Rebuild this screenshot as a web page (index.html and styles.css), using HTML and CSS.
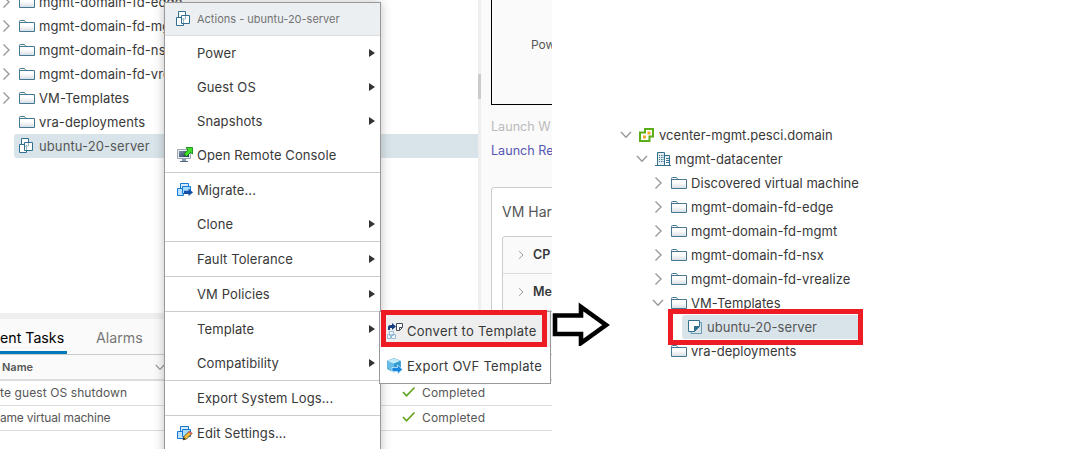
FILE: index.html
```
<!DOCTYPE html>
<html lang="en">
<head>
<meta charset="utf-8">
<title>Convert to Template</title>
<link rel="stylesheet" href="styles.css">
</head>
<body>
<svg class="defs" width="0" height="0">
  <defs>
    <linearGradient id="fade" x1="0" y1="0" x2="0" y2="1"><stop offset=".45" stop-color="#fff"/><stop offset="1" stop-color="#d5dde2"/></linearGradient>
    <linearGradient id="screen" x1="0" y1="0" x2="1" y2="1"><stop offset="0" stop-color="#8092a8"/><stop offset="1" stop-color="#243a5c"/></linearGradient>
    <symbol id="folder" viewBox="0 0 16 16"><path d="M.5 13.500V3.500Q.5 2.500 1.500 2.500H5.500L7 4.500H15.500V13.500Z" fill="url(#fade)" stroke="#447791"/><path d="M1 4.500H7" stroke="#447791"/></symbol>
    <symbol id="vm" viewBox="0 0 16 16"><path d="M3.500 6V.5H10.500V4" fill="#fff" stroke="#31708f"/><path d="M1.500 6.500H8.500V14.500H1.500Z" fill="#fff" stroke="#31708f"/><path d="M6.500 4.500H14.500V12.500H6.500Z" fill="#fff" stroke="#31708f"/><path d="M8.500 7V12M10.500 5V8H7" stroke="#9abaca" fill="none"/></symbol>
    <symbol id="right" viewBox="0 0 10 14"><path d="M1.500 1.500L7 7L1.500 12.500" fill="none" stroke="#999" stroke-width="1.400"/></symbol>
    <symbol id="down" viewBox="0 0 12 8"><path d="M1 1L6 6.300L11 1" fill="none" stroke="#999" stroke-width="1.400"/></symbol>
    <symbol id="vcenter" viewBox="0 0 16 16"><path d="M6 5.500V2H14V9.500H10.500V14H1V5.500Z" fill="#fff" stroke="#5cae17" stroke-width="2"/><path d="M4 8.500h3v3H4zM8.500 4.500h3v3h-3z" fill="#f9a825"/></symbol>
    <symbol id="datacenter" viewBox="0 0 16 16"><path d="M2.500 14V1.500H9.500V14M9.500 4.500H14.500V14" fill="#e5edf1" stroke="#31708f"/><path d="M0 14.500H16" stroke="#31708f"/><path d="M4.500 4V12M6.500 4V12M8 4V12" stroke="#447791" stroke-dasharray="1 1"/><path d="M11 7.500h3M11 9.500h3M11 11.500h3" stroke="#447791"/></symbol>
    <symbol id="template" viewBox="0 0 16 16"><path d="M4 12.500V14.500H14.500V3.500H12" fill="none" stroke="#6b9ab1"/><path d="M1.500 1.500H12.500V7.500L7.500 12.500H1.500Z" fill="#fff" stroke="#31708f"/><path d="M7 13V7H13Z" fill="#31708f"/></symbol>
    <symbol id="console" viewBox="0 0 16 16"><path d="M.5 2.500H13.500V11.500H.5Z" fill="#e8edf2" stroke="#9ba7b5"/><path d="M2 4H12V10H2Z" fill="url(#screen)"/><path d="M5 12h4v2H5z" fill="#8798ad"/><path d="M3 14.500H11" stroke="#52667f"/><path d="M9 .5H15.500V7L13.500 5.500L9.500 9.500L7 7L11 3Z" fill="#3fdc29" stroke="#087b0b" stroke-width=".8"/></symbol>
    <symbol id="cubes" viewBox="0 0 16 16"><path d="M3.500 1.500H11.500V8.500H3.500Z" fill="#d3ecff" stroke="#1578d3"/><path d="M.5 6.500H6.500V13.500H.5Z" fill="#bce2ff" stroke="#1578d3"/><path d="M5.500 4.500H13.500V11.500H5.500Z" fill="#a5dcff" stroke="#1578d3"/></symbol>
    <symbol id="migrate" viewBox="0 0 16 16"><use href="#cubes"/><path d="M7 8.800H11.500V6.500L16 10.500L11.500 14V12H7Z" fill="#1550a6"/></symbol>
    <symbol id="edit" viewBox="0 0 16 16"><use href="#cubes"/><path d="M6 14.800L7 11.500L12.500 6L15 8.500L9.500 14Z" fill="#f9bd35" stroke="#493c26" stroke-width=".8"/><path d="M12.500 6L15 8.500L14 9.500L11.500 7Z" fill="#dd536d"/><path d="M6 14.800L7 12.500L8.500 14Z" fill="#222"/></symbol>
    <symbol id="convert" viewBox="0 0 16 16"><path d="M1 7V4Q1 2 4 2H5V0L9 3.500L5 7V5H3V7Z" fill="#173d83"/><path d="M9.500.5H15.500V4.500L12.500 7.500H9.500Z" fill="#fff" stroke="#424b59"/><path d="M12.500 7V4.500H15" fill="none" stroke="#424b59"/><path d="M2.500 8.500h4v4h-4zM.5 11.500h3v4h-3zM4.500 11.500h4v4h-4z" fill="#eef7ff" stroke="#97b9d5"/></symbol>
    <symbol id="export" viewBox="0 0 16 16"><path d="M7 .5L13.500 3V11L7 14L.5 11V3Z" fill="#65bde8" stroke="#4b9fc9" stroke-width=".7"/><path d="M.5 3L7 5.500L13.500 3L7 .5Z" fill="#c2ebfb"/><path d="M7 5.500V14L13.500 11V3Z" fill="#349bd2"/><path d="M5 9.500H10.500V7L15.500 11.500L10.500 16V13.500H5Z" fill="#1686df" stroke="#e4f5ff" stroke-width=".7"/></symbol>
    <symbol id="check" viewBox="0 0 14 12"><path d="M1 6L4.500 9.800L12.500 1.500" fill="none" stroke="#62a420" stroke-width="1.700"/></symbol>
  </defs>
</svg>
<main class="stage">
  <section class="client">
    <div class="upper">
      <div class="inventory">
        <div class="row"><svg class="chev"><use href="#right"/></svg><svg class="icon"><use href="#folder"/></svg><span>mgmt-domain-fd-edge</span></div>
        <div class="row"><svg class="chev"><use href="#right"/></svg><svg class="icon"><use href="#folder"/></svg><span>mgmt-domain-fd-mgmt</span></div>
        <div class="row"><svg class="chev"><use href="#right"/></svg><svg class="icon"><use href="#folder"/></svg><span>mgmt-domain-fd-nsx</span></div>
        <div class="row"><svg class="chev"><use href="#right"/></svg><svg class="icon"><use href="#folder"/></svg><span>mgmt-domain-fd-vrealize</span></div>
        <div class="row"><svg class="chev"><use href="#right"/></svg><svg class="icon"><use href="#folder"/></svg><span>VM-Templates</span></div>
        <div class="row leaf"><svg class="icon"><use href="#folder"/></svg><span>vra-deployments</span></div>
        <div class="row selected"><svg class="icon"><use href="#vm"/></svg><span>ubuntu-20-server</span></div>
      </div>
      <div class="splitter"><div class="grip"></div></div>
      <div class="summary">
        <div class="preview">Pow</div>
        <div class="launch disabled">Launch W</div>
        <div class="launch">Launch Re</div>
        <div class="card">
          <div class="card-title">VM Har</div>
          <div class="hardware">
            <div class="hw"><svg class="hw-chev"><use href="#right"/></svg>CP</div>
            <div class="hw"><svg class="hw-chev"><use href="#right"/></svg>Me</div>
          </div>
        </div>
      </div>
    </div>
    <div class="divider"></div>
    <div class="tabs"><div class="tab active">ent Tasks</div><div class="tab">Alarms</div></div>
    <div class="task head"><span>Name</span><svg class="sort"><use href="#down"/></svg></div>
    <div class="task"><span class="task-name wide">te guest OS shutdown</span><svg class="check"><use href="#check"/></svg><span class="status">Completed</span></div>
    <div class="task"><span class="task-name tight">ame virtual machine</span><svg class="check"><use href="#check"/></svg><span class="status">Completed</span></div>
  </section>

  <section class="result">
    <div class="row l0"><svg class="expand"><use href="#down"/></svg><svg class="icon"><use href="#vcenter"/></svg><span>vcenter-mgmt.pesci.domain</span></div>
    <div class="row l1"><svg class="expand"><use href="#down"/></svg><svg class="icon"><use href="#datacenter"/></svg><span>mgmt-datacenter</span></div>
    <div class="row l2"><svg class="chev"><use href="#right"/></svg><svg class="icon"><use href="#folder"/></svg><span>Discovered virtual machine</span></div>
    <div class="row l2"><svg class="chev"><use href="#right"/></svg><svg class="icon"><use href="#folder"/></svg><span>mgmt-domain-fd-edge</span></div>
    <div class="row l2"><svg class="chev"><use href="#right"/></svg><svg class="icon"><use href="#folder"/></svg><span>mgmt-domain-fd-mgmt</span></div>
    <div class="row l2"><svg class="chev"><use href="#right"/></svg><svg class="icon"><use href="#folder"/></svg><span>mgmt-domain-fd-nsx</span></div>
    <div class="row l2"><svg class="chev"><use href="#right"/></svg><svg class="icon"><use href="#folder"/></svg><span>mgmt-domain-fd-vrealize</span></div>
    <div class="row l2"><svg class="expand"><use href="#down"/></svg><svg class="icon"><use href="#folder"/></svg><span>VM-Templates</span></div>
    <div class="row picked"><svg class="icon"><use href="#template"/></svg><span>ubuntu-20-server</span></div>
    <div class="row l2 childless"><svg class="icon"><use href="#folder"/></svg><span>vra-deployments</span></div>
    <div class="mark mark-result"></div>
  </section>

  <nav class="menu">
    <div class="title"><svg class="icon"><use href="#vm"/></svg><span>Actions - ubuntu-20-server</span></div>
    <div class="item sub"><span>Power</span></div>
    <div class="item sub"><span>Guest OS</span></div>
    <div class="item sub"><span>Snapshots</span></div>
    <div class="item"><svg class="icon"><use href="#console"/></svg><span>Open Remote Console</span></div>
    <div class="item sep"><svg class="icon"><use href="#migrate"/></svg><span>Migrate...</span></div>
    <div class="item sub"><span>Clone</span></div>
    <div class="item sub sep"><span>Fault Tolerance</span></div>
    <div class="item sub sep"><span>VM Policies</span></div>
    <div class="item sub sep"><span>Template</span></div>
    <div class="item sub"><span>Compatibility</span></div>
    <div class="item sep"><span>Export System Logs...</span></div>
    <div class="item sep"><svg class="icon"><use href="#edit"/></svg><span>Edit Settings...</span></div>
  </nav>
  <nav class="submenu">
    <div class="choice hover"><svg class="icon"><use href="#convert"/></svg><span>Convert to Template</span></div>
    <div class="choice"><svg class="icon"><use href="#export"/></svg><span>Export OVF Template</span></div>
  </nav>
  <div class="mark mark-menu"></div>
  <svg class="arrow" viewBox="0 0 60 44"><path d="M5 13.500H31V5L56 23L31 41V32H5Z" fill="#fff" stroke="#000" stroke-width="4.600"/></svg>
</main>
</body>
</html>
```
FILE: styles.css
```
* { box-sizing: border-box; }
body { margin: 0; background: #fff; font: 13px/24px Inter, "Noto Sans", sans-serif; color: #383838; }
.defs { position: absolute; }
svg { flex: none; }
.stage { position: relative; display: flex; width: 1070px; height: 449px; overflow: hidden; white-space: nowrap; }
.client { width: 552px; height: 449px; overflow: hidden; }
.upper { display: flex; height: 313px; }
.inventory { width: 478px; height: 313px; overflow: hidden; display: flex; flex-direction: column; justify-content: flex-start; }
.row { flex: none; display: flex; align-items: center; height: 24px; }
.icon { width: 16px; height: 16px; margin-right: 4px; }
.chev { width: 10px; height: 14px; }
.expand { width: 12px; height: 8px; }
.inventory .row { padding-left: 2px; letter-spacing: .1px; }
.inventory .row:first-child { margin-top: -10px; }
.inventory .chev { margin-right: 7px; }
.inventory .row.leaf { padding-left: 19px; }
.inventory .row.selected { margin-left: 14px; padding-left: 4px; background: #d9e4ea; border-radius: 3px 0 0 3px; color: #565656; }
.selected .icon { margin-right: 5px; }
.splitter { width: 3px; background: #eee; padding-top: 74px; }
.grip { height: 25px; background: #ccc; }
.summary { width: 71px; height: 313px; padding-left: 10px; background: #fafafa; overflow: hidden; }
.preview { width: 100px; height: 105px; padding: 33px 0 0 39px; border-left: 1px solid #000; border-bottom: 1px solid #000; color: #565656; font-size: 12px; }
.launch { height: 24px; color: #5557b5; font-size: 12.600px; }
.launch.disabled { margin-top: 10px; color: #bbb; }
.card { margin-top: 24px; width: 100px; height: 150px; padding: 12px 10px; border: 1px solid #ccc; border-radius: 3px; background: #fff; }
.card-title { font-size: 14px; color: #565656; height: 36px; }
.hardware { border: 1px solid #ccc; border-radius: 3px; background: #fafafa; }
.hw { display: flex; align-items: center; height: 37px; font-weight: 600; font-size: 12.500px; border-bottom: 1px solid #ddd; }
.hw-chev { width: 7px; height: 10px; margin: 0 8px 0 15px; }
.divider { height: 6px; background: #eee; }
.tabs { display: flex; height: 36px; background: #fafafa; border-bottom: 1px solid #ccc; }
.tab { font-size: 14.200px; line-height: 38px; height: 35px; color: #777; }
.tab.active { width: 67px; margin-right: 29px; color: #000; border-bottom: 3px solid #0079b8; }
.task { display: flex; align-items: center; height: 25px; border-bottom: 1px solid #ddd; font-size: 12px; color: #565656; }
.task.head { height: 26px; padding-left: 2px; background: #fafafa; border-bottom: 2px solid #ddd; font-weight: 600; font-size: 11px; }
.head span { width: 153px; }
.sort { width: 10px; height: 7px; }
.task-name { width: 402px; }
.wide { letter-spacing: .1px; }
.tight { letter-spacing: -.2px; }
.status { letter-spacing: .15px; }
.check { width: 14px; height: 12px; margin: -3px 6px 0 0; }
.result { position: relative; width: 518px; padding: 123px 0 0 68px; }
.result span { letter-spacing: .05px; }
.l1 { padding-left: 16px; }
.l2 { padding-left: 32px; }
.result .expand { margin-right: 7px; }
.result .chev { margin: 0 7px 0 2px; }
.result .childless { padding-left: 51px; }
.picked { width: 176px; margin-left: 62px; padding-left: 5px; background: #d9e4ea; border-radius: 3px 0 0 3px; color: #565656; }
.mark { position: absolute; border: 5px solid #ed1c24; }
.mark-result { left: 116px; top: 309px; width: 195px; height: 36px; }
.mark-menu { left: 381px; top: 310px; width: 166px; height: 37px; }
.menu { position: absolute; left: 164px; top: 2px; width: 217px; height: 460px; background: #fff; border: 1px solid #999; box-shadow: 0 0 10px rgba(0,0,0,.25); }
.title { display: flex; align-items: center; height: 33px; padding-left: 10px; background: #ebeff2; border-bottom: 1px solid #ddd; font-size: 11px; color: #737373; }
.title .icon { margin-right: 6px; }
.item { display: flex; align-items: center; height: 34px; padding-left: 32px; letter-spacing: .1px; }
.item span { margin-top: -1px; }
.item .icon { margin: 0 4px 0 -20px; }
.item.sep { height: 35px; border-top: 1px solid #ccc; }
.item.sub::after { content: ""; margin: -1px 5px 0 auto; border-left: 6px solid #333; border-top: 4px solid transparent; border-bottom: 4px solid transparent; }
.submenu { position: absolute; left: 379px; top: 311px; width: 172px; height: 73px; background: #fff; border: 1px solid #999; letter-spacing: .27px; }
.choice { display: flex; align-items: center; height: 35px; padding: 3px 0 0 7px; }
.choice.hover { background: #eee; }
.arrow { position: absolute; left: 550px; top: 302px; width: 60px; height: 44px; }
```
